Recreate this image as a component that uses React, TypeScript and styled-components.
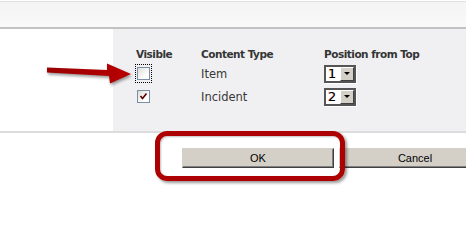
import React from 'react';
import styled, { createGlobalStyle } from 'styled-components';

const GlobalStyle = createGlobalStyle`
  html, body {
    margin: 0;
    padding: 0;
    background: #ffffff;
  }
  body {
    width: 466px;
    height: 207px;
    overflow: hidden;
    font-family: "DejaVu Sans", Verdana, sans-serif;
  }
`;

const Page = styled.div`
  width: 466px;
  height: 207px;
  overflow: hidden;
  background: #fff;
`;

const TopBar = styled.div`
  margin-top: 1px;
  height: 25px;
  border-top: 1px solid #e1e1e1;
  border-bottom: 2px solid #c2c2c2;
  background: linear-gradient(#f4f4f4, #f9f9f9);
`;

const MainRow = styled.div`
  position: relative;
  display: flex;
  height: 102px;
  border-bottom: 2px solid #dcdcdc;
`;

const LeftBlank = styled.div`
  width: 113px;
  flex: none;
  background: #fff;
`;

const Panel = styled.div`
  flex: 1;
  background: #f0f0f2;
  padding: 19px 0 0 23px;
`;

const Grid = styled.div`
  display: grid;
  grid-template-columns: 65px 123px auto;
  grid-template-rows: 14px 23px 23px;
  align-items: center;
`;

const Header = styled.div`
  align-self: start;
  font-size: 10.5px;
  line-height: 12px;
  font-weight: bold;
  letter-spacing: -0.5px;
  color: #353535;
  white-space: nowrap;
`;

const Cell = styled.div`
  font-size: 11.5px;
  color: #383838;
  white-space: nowrap;
  display: flex;
  align-items: center;
`;

const Focus = styled.span<{ $focused?: boolean }>`
  display: inline-flex;
  align-items: center;
  justify-content: center;
  width: 15px;
  height: 17px;
  margin-left: -1px;
  border: 1px dotted ${p => (p.$focused ? '#000' : 'transparent')};
`;

const Box = styled.span`
  position: relative;
  width: 11px;
  height: 11px;
  border: 1px solid #7c8ea6;
  background: linear-gradient(135deg, #dcdcd6, #ffffff 70%);
  display: block;
`;

const Check = styled.svg`
  position: absolute;
  left: 1px;
  top: 1px;
`;

const Select = styled.div`
  display: flex;
  width: 28px;
  height: 14px;
  border: 2px solid #555;
  box-shadow: 1px 1px 0 #fff;
  background: #fff;
`;

const SelectValue = styled.span`
  flex: 1;
  font-size: 13px;
  line-height: 14px;
  padding-left: 2px;
  color: #000;
  text-shadow: -0.4px 0 0 rgba(200, 0, 0, 0.5);
`;

const SelectButton = styled.span`
  width: 12px;
  height: 12px;
  background: #d4d0c8;
  border: 1px solid;
  border-color: #fff #404040 #404040 #fff;
  display: flex;
  align-items: center;
  justify-content: center;
`;

const Caret = styled.span`
  width: 0;
  height: 0;
  border-left: 3px solid transparent;
  border-right: 3px solid transparent;
  border-top: 3px solid #000;
`;

const Arrow = styled.svg`
  position: absolute;
  left: 40px;
  top: 1px;
  overflow: visible;
  filter: drop-shadow(1px 2px 1.5px rgba(0, 0, 0, 0.4));
`;

const ButtonRow = styled.div`
  position: relative;
  display: flex;
  gap: 5px;
  padding: 15px 0 0 182px;
`;

const Button = styled.button`
  flex: none;
  width: 152px;
  height: 20px;
  padding: 0;
  background: #d4d0c8;
  border: 1px solid;
  border-color: #d4d0c8 #404040 #404040 #d4d0c8;
  box-shadow: inset -1px -1px 0 #808080;
  font-family: "Liberation Sans", Arial, sans-serif;
  font-size: 11px;
  color: #000;
`;

const Highlight = styled.div`
  position: absolute;
  left: 155px;
  top: -2px;
  width: 180px;
  height: 40px;
  border: 5px solid #ad0000;
  border-radius: 12px;
  box-shadow: 2px 2px 3px rgba(0, 0, 0, 0.4), inset 1px 1px 2px rgba(0, 0, 0, 0.25);
  pointer-events: none;
`;

const rows = [
  { visible: false, focused: true, type: 'Item', pos: '1' },
  { visible: true, focused: false, type: 'Incident', pos: '2' },
];

export default function App() {
  return (
    <Page>
      <GlobalStyle />
      <TopBar />
      <MainRow>
        <LeftBlank />
        <Panel>
          <Grid>
            <Header>Visible</Header>
            <Header>Content Type</Header>
            <Header>Position from Top</Header>
            {rows.map(r => (
              <React.Fragment key={r.type}>
                <Cell>
                  <Focus $focused={r.focused}>
                    <Box>
                      {r.visible && (
                        <Check width="9" height="9" viewBox="0 0 9 9">
                          <path d="M1.5 4 L3.5 6.5 L7.5 1.5" fill="none" stroke="#5a0000" strokeWidth="1.6" />
                        </Check>
                      )}
                    </Box>
                  </Focus>
                </Cell>
                <Cell>{r.type}</Cell>
                <Cell>
                  <Select>
                    <SelectValue>{r.pos}</SelectValue>
                    <SelectButton>
                      <Caret />
                    </SelectButton>
                  </Select>
                </Cell>
              </React.Fragment>
            ))}
          </Grid>
        </Panel>
        <Arrow width="95" height="60" viewBox="0 0 95 60">
          <defs>
            <linearGradient id="ar" x1="0" y1="0" x2="1" y2="0">
              <stop offset="0" stopColor="#9a0000" />
              <stop offset="1" stopColor="#b80000" />
            </linearGradient>
          </defs>
          <path
            d="M7 37.5 L67 40 L67 33.5 L91 44 L70 53.5 L69 46 L7 42.5 Z"
            fill="url(#ar)"
          />
        </Arrow>
      </MainRow>
      <ButtonRow>
        <Button>OK</Button>
        <Button>Cancel</Button>
        <Highlight />
      </ButtonRow>
    </Page>
  );
}
